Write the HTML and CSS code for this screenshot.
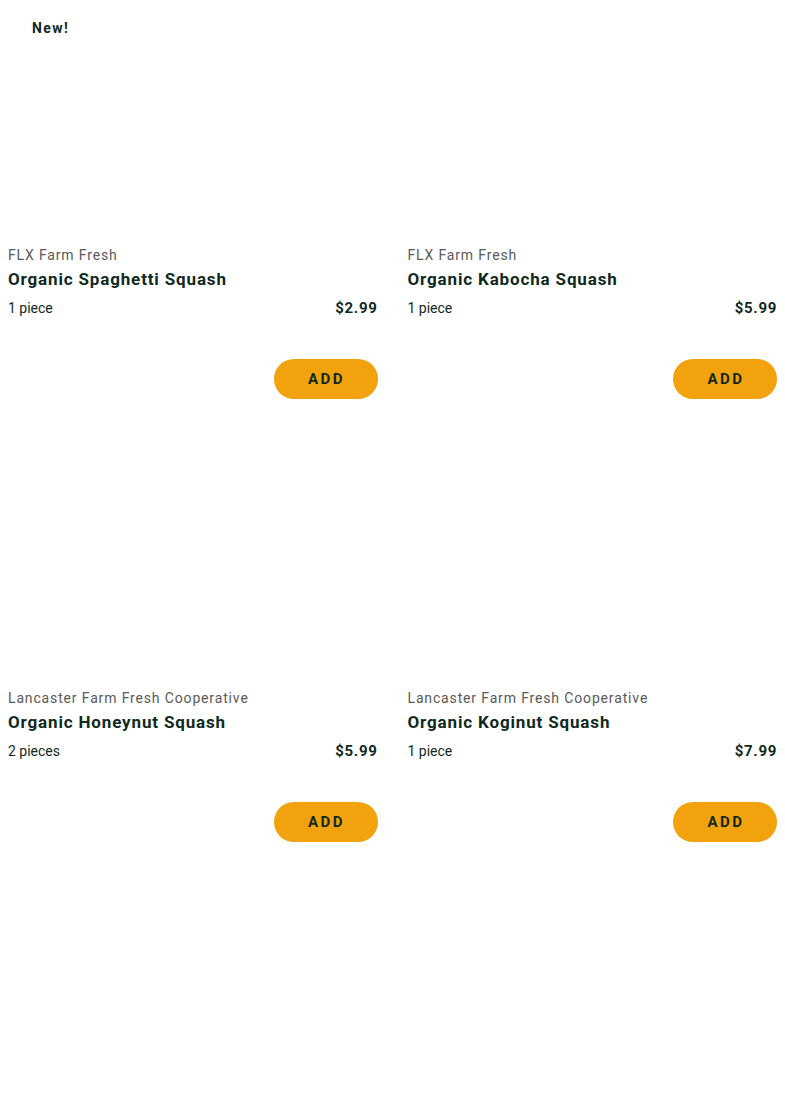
FILE: index.html
```html
<!DOCTYPE html>
<html lang="en">
<head>
<meta charset="utf-8">
<title>Squash</title>
<link rel="stylesheet" href="styles.css">
</head>
<body>
<div class="grid">
  <div class="card">
    <div class="image"><span class="badge">New!</span></div>
    <div class="supplier">FLX Farm Fresh</div>
    <div class="title">Organic Spaghetti Squash</div>
    <div class="meta"><span class="qty">1 piece</span><span class="price">$2.99</span></div>
    <div class="actions"><button class="add">ADD</button></div>
  </div>
  <div class="card">
    <div class="image"></div>
    <div class="supplier">FLX Farm Fresh</div>
    <div class="title">Organic Kabocha Squash</div>
    <div class="meta"><span class="qty">1 piece</span><span class="price">$5.99</span></div>
    <div class="actions"><button class="add">ADD</button></div>
  </div>
  <div class="card">
    <div class="image"></div>
    <div class="supplier">Lancaster Farm Fresh Cooperative</div>
    <div class="title">Organic Honeynut Squash</div>
    <div class="meta"><span class="qty">2 pieces</span><span class="price">$5.99</span></div>
    <div class="actions"><button class="add">ADD</button></div>
  </div>
  <div class="card">
    <div class="image"></div>
    <div class="supplier">Lancaster Farm Fresh Cooperative</div>
    <div class="title">Organic Koginut Squash</div>
    <div class="meta"><span class="qty">1 piece</span><span class="price">$7.99</span></div>
    <div class="actions"><button class="add">ADD</button></div>
  </div>
</div>
</body>
</html>
```
FILE: styles.css
```css
html, body {
  background: #ffffff;
}
body {
  margin: 8px;
  font-family: Roboto, "Liberation Sans", sans-serif;
  color: #10291e;
}
.grid {
  display: grid;
  grid-template-columns: 1fr 1fr;
  column-gap: 30px;
  row-gap: 52px;
}
.card {
  display: flex;
  flex-direction: column;
}
.image {
  position: relative;
  height: 232px;
}
.badge {
  position: absolute;
  top: 9px;
  left: 16px;
  padding: 2px 8px;
  font-size: 14px;
  line-height: 18px;
  font-weight: 700;
  letter-spacing: 1.4px;
  color: #10291e;
  background: #ffffff;
}
.supplier {
  margin-top: 6px;
  font-size: 14px;
  line-height: 18px;
  color: #5a5a5a;
  letter-spacing: 0.85px;
}
.title {
  margin-top: 3px;
  font-size: 17px;
  line-height: 24px;
  font-weight: 700;
  letter-spacing: 0.85px;
}
.meta {
  margin-top: 7px;
  display: flex;
  justify-content: space-between;
  align-items: center;
  line-height: 20px;
}
.qty {
  font-size: 14px;
}
.price {
  font-size: 15px;
  font-weight: 700;
  letter-spacing: 0.7px;
}
.actions {
  margin-top: 41px;
  display: flex;
  justify-content: flex-end;
}
.add {
  width: 104px;
  height: 40px;
  border: none;
  border-radius: 20px;
  background: #f2a20c;
  color: #10291e;
  font-family: Roboto, "Liberation Sans", sans-serif;
  font-size: 15px;
  font-weight: 700;
  letter-spacing: 2.5px;
  padding: 0 0 0 2px;
}
```
